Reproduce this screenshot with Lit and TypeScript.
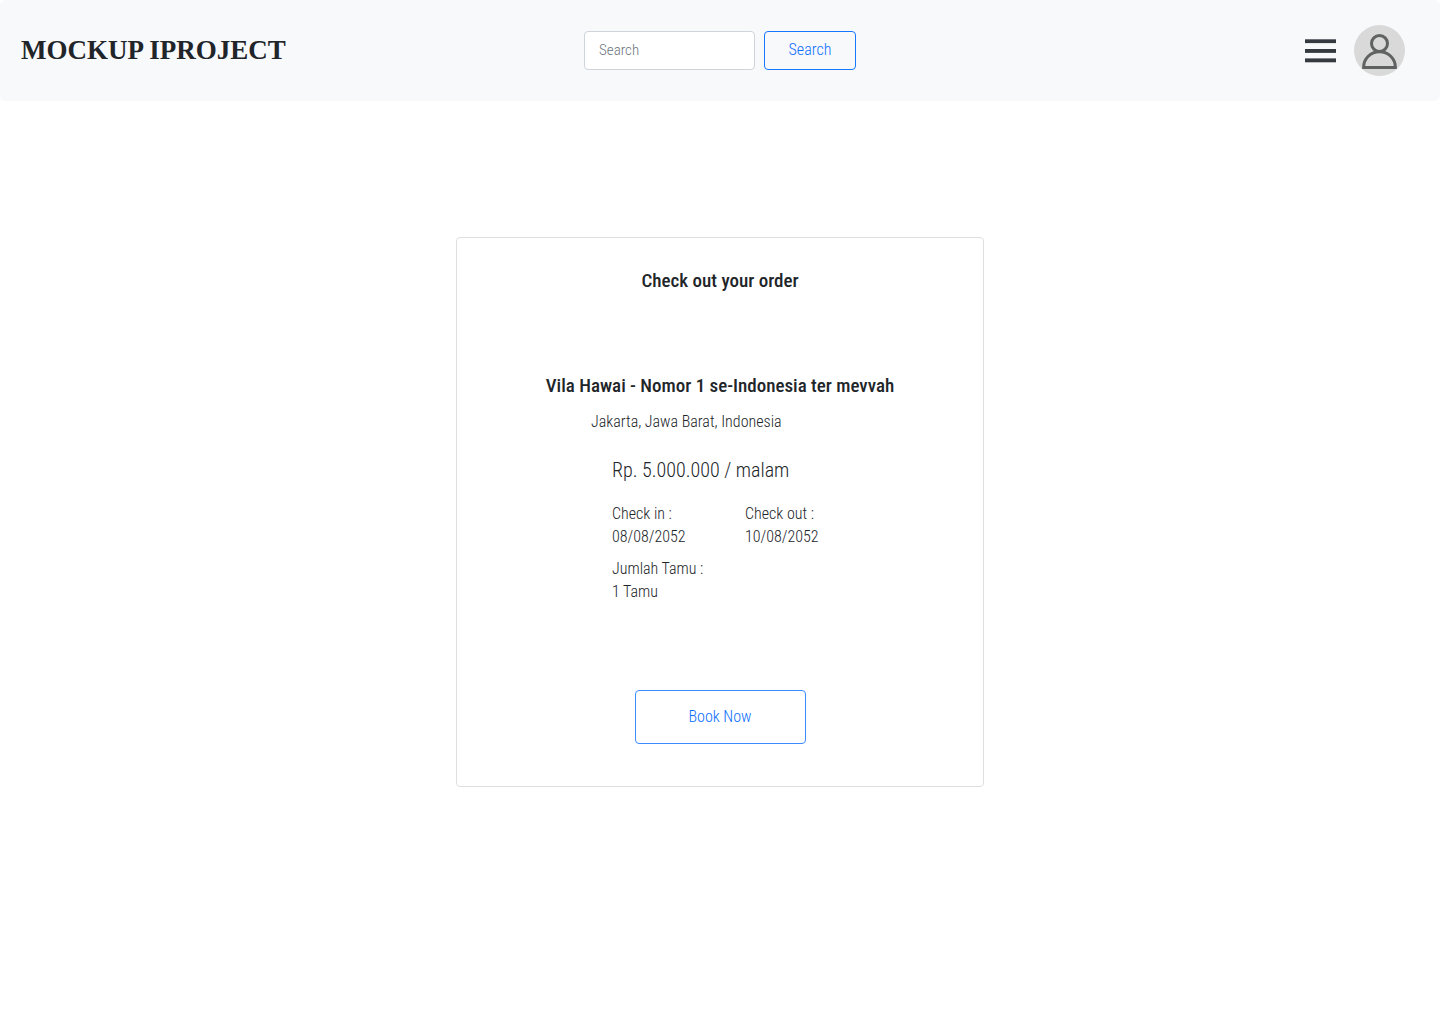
import { LitElement, html, css } from "lit";
import { customElement, property } from "lit/decorators.js";

@customElement("site-header")
class SiteHeader extends LitElement {
  static styles = css`
    :host {
      display: block;
    }
    .bar {
      display: grid;
      grid-template-columns: 1fr auto 1fr;
      align-items: center;
      box-sizing: border-box;
      min-height: 101px;
      background: #f8f9fb;
      border-radius: 6px;
    }
    .brand {
      margin: 0 0 2px 21px;
      font: 600 27px/36px "Liberation Serif", serif;
      color: #212529;
      white-space: nowrap;
    }
    .search {
      display: flex;
      align-items: center;
      gap: 9px;
    }
    .field,
    .submit {
      box-sizing: border-box;
      height: 39px;
      border-radius: 4px;
      font-family: "Roboto Condensed", Roboto, sans-serif;
      font-weight: 300;
    }
    .field {
      width: 171px;
      padding: 0 14px 2px;
      border: 1px solid #ced4da;
      background: #fff;
      color: #212529;
      font-size: 15px;
    }
    .field::placeholder {
      color: #6c757d;
      opacity: 1;
    }
    .submit {
      width: 92px;
      padding: 0 0 2px;
      border: 1px solid #1677ff;
      background: transparent;
      color: #0d6efd;
      font-size: 16px;
    }
    .actions {
      display: flex;
      justify-content: flex-end;
      align-items: center;
      gap: 18px;
      margin-right: 35px;
    }
    .icon {
      display: block;
      padding: 0;
      border: 0;
      background: none;
    }
    .icon svg {
      display: block;
    }
  `;

  render() {
    return html`
      <header class="bar">
        <h1 class="brand">MOCKUP IPROJECT</h1>
        <form class="search" role="search" @submit=${(e: Event) => e.preventDefault()}>
          <input class="field" type="search" placeholder="Search" aria-label="Search" />
          <button class="submit" type="submit">Search</button>
        </form>
        <nav class="actions">
          <button class="icon" type="button" aria-label="Menu">
            <svg width="31" height="24" viewBox="0 0 31 24" fill="#343a40">
              <rect y="0.3" width="31" height="3.8" />
              <rect y="10" width="31" height="3.9" />
              <rect y="19.4" width="31" height="3.9" />
            </svg>
          </button>
          <button class="icon" type="button" aria-label="Account">
            <svg width="51" height="51" viewBox="0 0 51 51" fill="none">
              <circle cx="25.5" cy="25.5" r="25.5" fill="#d9d9d9" />
              <g stroke="#606262" stroke-width="3">
                <circle cx="25.5" cy="18.5" r="8" />
                <path d="M9.6 42.5C9.6 33.5 16.7 26.8 25.5 26.8S41.4 33.5 41.4 42.5Z" />
              </g>
            </svg>
          </button>
        </nav>
      </header>
    `;
  }
}

@customElement("order-card")
class OrderCard extends LitElement {
  @property() villa = "Vila Hawai - Nomor 1 se-Indonesia ter mevvah";
  @property() place = "Jakarta, Jawa Barat, Indonesia";
  @property() price = "Rp. 5.000.000 / malam";
  @property() checkIn = "08/08/2052";
  @property() checkOut = "10/08/2052";
  @property() guests = "1 Tamu";

  static styles = css`
    :host {
      display: block;
    }
    .card {
      display: flex;
      flex-direction: column;
      box-sizing: border-box;
      padding: 27px 24px 42px;
      border: 1px solid #dfdfdf;
      border-radius: 4px;
      background: #fff;
      color: #212529;
      font: 300 16px/23px "Roboto Condensed", Roboto, sans-serif;
    }
    .title,
    .villa {
      margin: 0;
      font-size: 19px;
      line-height: 32px;
      font-weight: 500;
      text-align: center;
    }
    .villa {
      margin-top: 73px;
    }
    .place {
      margin: 8px 0 0 110px;
    }
    .price {
      margin: 23px 0 0 131px;
      font-size: 20px;
      line-height: 28px;
    }
    .details {
      display: grid;
      grid-template-columns: 133px 1fr;
      row-gap: 9px;
      margin: 18px 0 0 131px;
    }
    .details dd {
      margin: 0;
    }
    .book {
      align-self: center;
      box-sizing: border-box;
      width: 171px;
      height: 54px;
      margin-top: 87px;
      padding: 0 0 2px;
      border: 1px solid #3c8bff;
      border-radius: 4px;
      background: #fff;
      color: #0d6efd;
      font: inherit;
    }
  `;

  render() {
    return html`
      <section class="card">
        <h2 class="title">Check out your order</h2>
        <h3 class="villa">${this.villa}</h3>
        <p class="place">${this.place}</p>
        <p class="price">${this.price}</p>
        <dl class="details">
          <div><dt>Check in :</dt><dd>${this.checkIn}</dd></div>
          <div><dt>Check out :</dt><dd>${this.checkOut}</dd></div>
          <div><dt>Jumlah Tamu :</dt><dd>${this.guests}</dd></div>
        </dl>
        <button class="book" type="button">Book Now</button>
      </section>
    `;
  }
}

@customElement("app-root")
class AppRoot extends LitElement {
  static styles = css`
    :host {
      display: block;
      min-height: 100vh;
      background: #fff;
    }
    .page {
      display: grid;
      grid-template-columns: minmax(0, 528px);
      justify-content: center;
      padding: 136px 16px;
    }
  `;

  render() {
    return html`
      <site-header></site-header>
      <main class="page"><order-card></order-card></main>
    `;
  }
}
